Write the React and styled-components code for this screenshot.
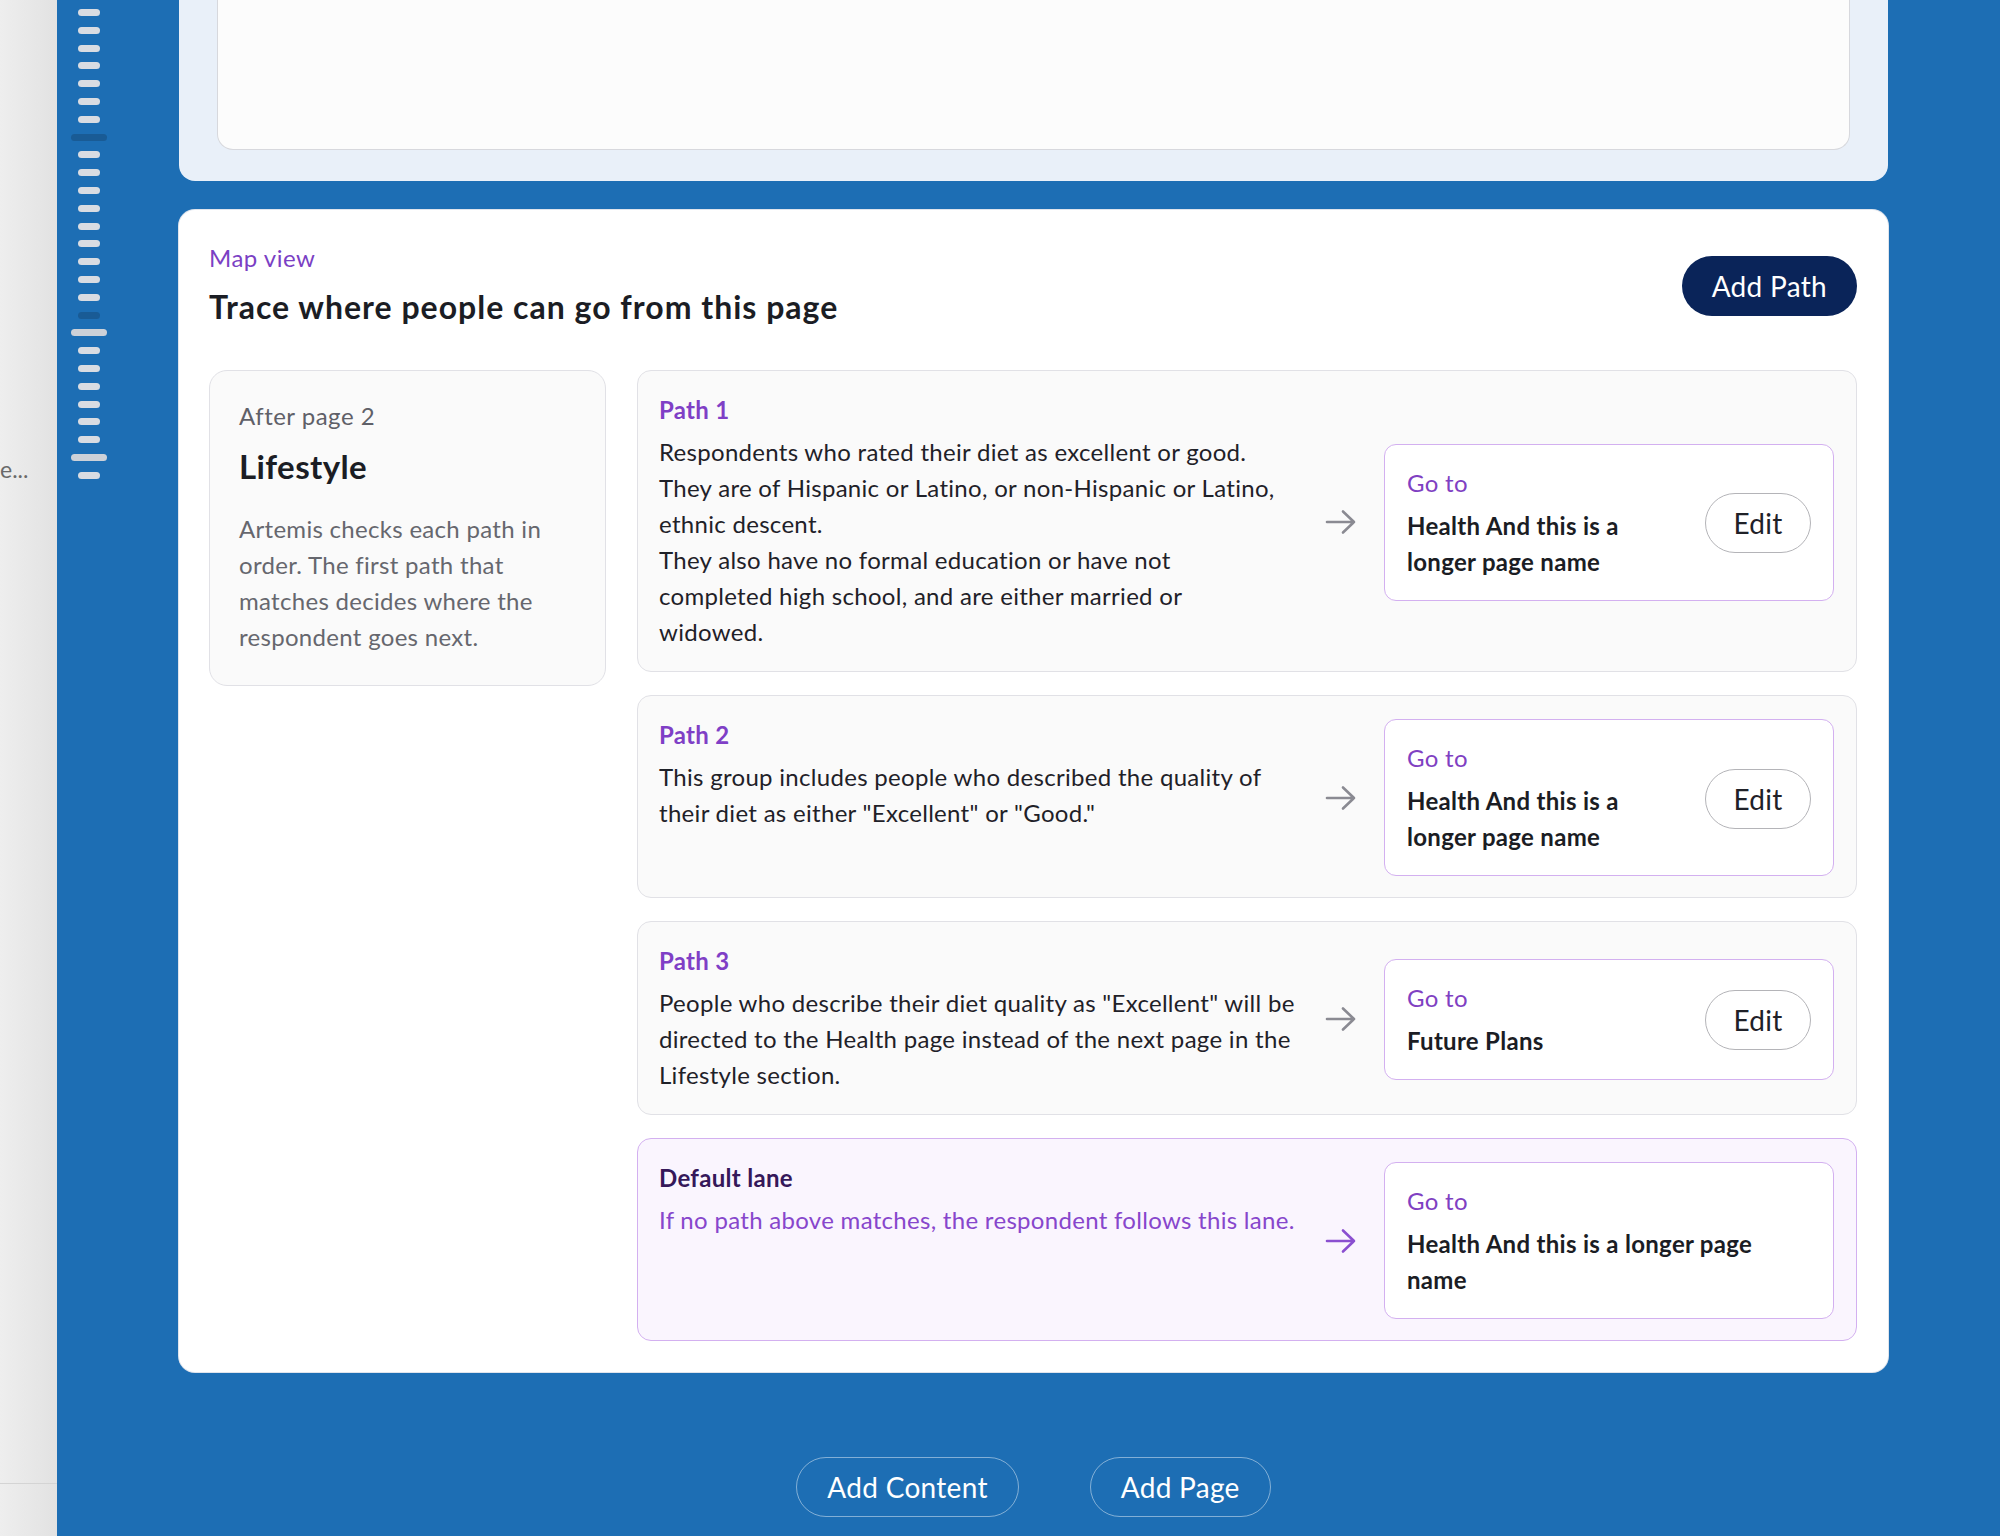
import styled, { createGlobalStyle } from "styled-components";

const GlobalStyle = createGlobalStyle`
  html, body {
    margin: 0;
    padding: 0;
    font-family: Lato, "Noto Sans", "Liberation Sans", sans-serif;
    color: #1f2128;
  }
  * {
    box-sizing: border-box;
  }
`;

const Page = styled.div`
  display: flex;
  width: 2000px;
  height: 1536px;
  overflow: hidden;
`;

const Rail = styled.div`
  width: 57px;
  flex-shrink: 0;
  display: flex;
  flex-direction: column;
  background: linear-gradient(to right, #eeeeee, #e2e2e2);
  overflow: hidden;
`;

const RailLabel = styled.span`
  margin-top: 455px;
  font-size: 23px;
  line-height: 28px;
  color: #6a6a6a;
  white-space: nowrap;
`;

const RailFooter = styled.div`
  margin-top: auto;
  height: 53px;
  border-top: 1.5px solid #d4d4d4;
`;

const Canvas = styled.div`
  flex: 1;
  display: flex;
  background: #1d6eb4;
`;

const Ticks = styled.div`
  width: 64px;
  flex-shrink: 0;
  display: flex;
  flex-direction: column;
  align-items: center;
  gap: 10.8px;
  padding-top: 9px;
`;

const Tick = styled.div`
  width: ${(p) => (p.$wide ? 36 : 22)}px;
  height: 7px;
  border-radius: 4px;
  background: ${(p) =>
    p.$dark ? "#195b95" : p.$wide ? "#cdd1d8" : "#d9dce2"};
`;

const Column = styled.div`
  width: 1709px;
  margin-left: 58px;
  display: flex;
  flex-direction: column;
`;

const TopCard = styled.div`
  height: 181px;
  padding: 0 38px 31px;
  background: #e9f0f9;
  border-radius: 0 0 16px 16px;
`;

const TopInner = styled.div`
  height: 100%;
  background: #fcfcfc;
  border: 1.5px solid #d7d8dd;
  border-top: 0;
  border-radius: 0 0 16px 16px;
`;

const MapCard = styled.section`
  margin-top: 29px;
  padding: 34px 31px 31px 30px;
  background: #ffffff;
  border-radius: 16px;
  box-shadow: 0 0 0 1px #dfe4ec;
  letter-spacing: 0.3px;
`;

const MapHeader = styled.header`
  display: flex;
  justify-content: space-between;
  align-items: flex-start;
  margin-bottom: 43px;
`;

const Eyebrow = styled.div`
  font-size: 24px;
  line-height: 28px;
  letter-spacing: 0.5px;
  color: #7b3fc4;
`;

const Title = styled.h1`
  margin: 15px 0 0;
  font-size: 32px;
  line-height: 40px;
  font-weight: 700;
  letter-spacing: 1px;
  color: #1b1d24;
`;

const PrimaryButton = styled.button`
  margin-top: 12px;
  height: 60px;
  padding: 0 30px;
  border: none;
  border-radius: 30px;
  background: #0a2459;
  color: #ffffff;
  font-family: inherit;
  font-size: 28px;
  letter-spacing: 0.3px;
`;

const MapBody = styled.div`
  display: grid;
  grid-template-columns: 397px 1fr;
  gap: 31px;
  align-items: start;
`;

const InfoCard = styled.div`
  padding: 30px 29px;
  background: #fafafa;
  border: 1.5px solid #e1e1e6;
  border-radius: 18px;
`;

const InfoLabel = styled.div`
  font-size: 24px;
  line-height: 30px;
  letter-spacing: 0.5px;
  color: #5f6068;
`;

const InfoTitle = styled.h2`
  margin: 15px 0 0;
  font-size: 33px;
  line-height: 40px;
  font-weight: 700;
  letter-spacing: 0.4px;
  color: #1b1d24;
`;

const InfoText = styled.p`
  margin: 25px 0 0;
  font-size: 24px;
  line-height: 36px;
  color: #66676e;
`;

const Lanes = styled.div`
  display: flex;
  flex-direction: column;
  gap: 23px;
`;

const Lane = styled.div`
  display: flex;
  align-items: center;
  gap: 27px;
  padding: 23px 22px 21px 21px;
  background: ${(p) => (p.$fallback ? "#faf5fe" : "#fafafa")};
  border: 1.5px solid ${(p) => (p.$fallback ? "#d3b0f0" : "#e1e1e6")};
  border-radius: 14px;
`;

const LaneText = styled.div`
  flex: 1;
  align-self: flex-start;
  min-width: 0;
`;

const LaneName = styled.div`
  font-size: 24px;
  line-height: 32px;
  font-weight: 700;
  color: ${(p) => (p.$fallback ? "#35185a" : "#7f3fc6")};
`;

const LaneRule = styled.p`
  margin: 8px 0 0;
  font-size: 24px;
  line-height: 36px;
  color: ${(p) => (p.$fallback ? "#8746cc" : "#1f2128")};
  white-space: pre-line;
`;

const Arrow = styled.svg`
  width: 32px;
  height: 26px;
  flex-shrink: 0;
  color: ${(p) => (p.$fallback ? "#8a4fd0" : "#8a8a92")};
`;

const Target = styled.div`
  width: 450px;
  flex-shrink: 0;
  display: flex;
  align-items: center;
  gap: 20px;
  padding: 22px 22px 20px;
  background: #ffffff;
  border: 1.5px solid #d3b0f0;
  border-radius: 12px;
`;

const TargetText = styled.div`
  flex: 1;
  min-width: 0;
`;

const GoTo = styled.div`
  font-size: 24px;
  line-height: 32px;
  color: #8040c2;
`;

const TargetName = styled.div`
  margin-top: 9px;
  max-width: ${(p) => (p.$wide ? "370px" : "262px")};
  font-size: 24px;
  line-height: 36px;
  font-weight: 700;
  color: #1b1d24;
`;

const EditButton = styled.button`
  width: 106px;
  height: 60px;
  flex-shrink: 0;
  border: 1.5px solid #b4b4b8;
  border-radius: 30px;
  background: #ffffff;
  color: #1f2128;
  font-family: inherit;
  font-size: 28px;
  letter-spacing: 0.3px;
`;

const BottomActions = styled.div`
  display: flex;
  justify-content: center;
  gap: 71px;
  margin-top: 85px;
`;

const GhostButton = styled.button`
  height: 60px;
  padding: 0 30px;
  border: 1.5px solid rgba(255, 255, 255, 0.45);
  border-radius: 30px;
  background: transparent;
  color: #ffffff;
  font-family: inherit;
  font-size: 28px;
  letter-spacing: 0.3px;
`;

const ticks = [
  {}, {}, {}, {}, {}, {}, {},
  { wide: true, dark: true },
  {}, {}, {}, {}, {}, {}, {}, {}, {},
  { dark: true },
  { wide: true },
  {}, {}, {}, {}, {}, {},
  { wide: true },
  {},
];

const paths = [
  {
    name: "Path 1",
    rule:
      "Respondents who rated their diet as excellent or good.\nThey are of Hispanic or Latino, or non-Hispanic or Latino, ethnic descent.\nThey also have no formal education or have not\ncompleted high school, and are either married or\nwidowed.",
    target: "Health And this is a longer page name",
  },
  {
    name: "Path 2",
    rule:
      'This group includes people who described the quality of their diet as either "Excellent" or "Good."',
    target: "Health And this is a longer page name",
  },
  {
    name: "Path 3",
    rule:
      'People who describe their diet quality as "Excellent" will be directed to the Health page instead of the next page in the Lifestyle section.',
    target: "Future Plans",
  },
];

const ArrowIcon = ({ fallback }) => (
  <Arrow $fallback={fallback} viewBox="0 0 32 26" fill="none">
    <path
      d="M2 13h27M18 2.5l11 10.5-11 10.5"
      stroke="currentColor"
      strokeWidth="2.6"
      strokeLinecap="round"
      strokeLinejoin="round"
    />
  </Arrow>
);

const LaneRow = ({ name, rule, target, fallback }) => (
  <Lane $fallback={fallback}>
    <LaneText>
      <LaneName $fallback={fallback}>{name}</LaneName>
      <LaneRule $fallback={fallback}>{rule}</LaneRule>
    </LaneText>
    <ArrowIcon fallback={fallback} />
    <Target>
      <TargetText>
        <GoTo>Go to</GoTo>
        <TargetName $wide={fallback}>{target}</TargetName>
      </TargetText>
      {!fallback && <EditButton>Edit</EditButton>}
    </Target>
  </Lane>
);

export default function App() {
  return (
    <>
      <GlobalStyle />
      <Page>
        <Rail>
          <RailLabel>e...</RailLabel>
          <RailFooter />
        </Rail>
        <Canvas>
          <Ticks>
            {ticks.map((t, i) => (
              <Tick key={i} $wide={t.wide} $dark={t.dark} />
            ))}
          </Ticks>
          <Column>
            <TopCard>
              <TopInner />
            </TopCard>
            <MapCard>
              <MapHeader>
                <div>
                  <Eyebrow>Map view</Eyebrow>
                  <Title>Trace where people can go from this page</Title>
                </div>
                <PrimaryButton>Add Path</PrimaryButton>
              </MapHeader>
              <MapBody>
                <InfoCard>
                  <InfoLabel>After page 2</InfoLabel>
                  <InfoTitle>Lifestyle</InfoTitle>
                  <InfoText>
                    Artemis checks each path in order. The first path that
                    matches decides where the respondent goes next.
                  </InfoText>
                </InfoCard>
                <Lanes>
                  {paths.map((p) => (
                    <LaneRow key={p.name} {...p} />
                  ))}
                  <LaneRow
                    fallback
                    name="Default lane"
                    rule="If no path above matches, the respondent follows this lane."
                    target="Health And this is a longer page name"
                  />
                </Lanes>
              </MapBody>
            </MapCard>
            <BottomActions>
              <GhostButton>Add Content</GhostButton>
              <GhostButton>Add Page</GhostButton>
            </BottomActions>
          </Column>
        </Canvas>
      </Page>
    </>
  );
}
